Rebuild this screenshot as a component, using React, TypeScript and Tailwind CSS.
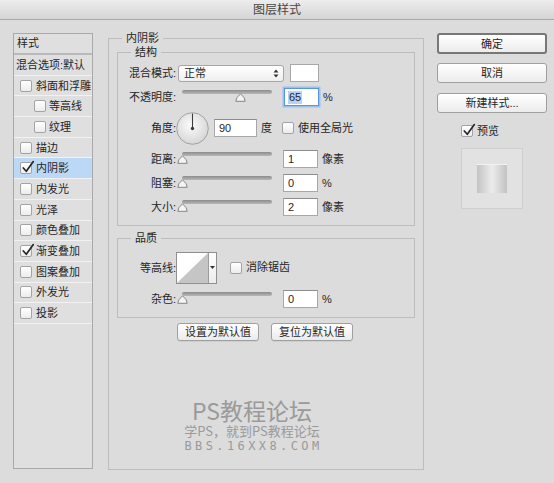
import React from 'react';

const effects = [
  { label: '斜面和浮雕' },
  { label: '等高线', indent: true },
  { label: '纹理', indent: true },
  { label: '描边' },
  { label: '内阴影', checked: true, active: true },
  { label: '内发光' },
  { label: '光泽' },
  { label: '颜色叠加' },
  { label: '渐变叠加', checked: true },
  { label: '图案叠加' },
  { label: '外发光' },
  { label: '投影' },
];

function Box({ checked }: { checked?: boolean }) {
  return (
    <span className="relative block w-[12px] h-[12px] shrink-0 rounded-[2px] border border-[#a3a3a3] bg-linear-to-b from-white to-[#ececec]">
      {checked && (
        <svg viewBox="0 0 14 14" className="absolute left-[0px] top-[-3px] w-[14px] h-[14px]">
          <path d="M2.3 8 L5.3 11.3 L12.3 1.6" fill="none" stroke="#262626" strokeWidth="1.7" strokeLinecap="round" strokeLinejoin="round" />
        </svg>
      )}
    </span>
  );
}

function Label({ children }: { children: React.ReactNode }) {
  return <span className="w-[58px] shrink-0 text-right leading-[14px]">{children}</span>;
}

function Field({ value, w = 35, focus }: { value: string; w?: number; focus?: boolean }) {
  if (focus) {
    return (
      <div className="h-[18px] w-[35px] shrink-0 bg-white border border-[#5b95dd] shadow-[0_0_0_1.5px_#9cc0ec] flex items-center pl-[3px]">
        <span className="bg-[#b4d3f6] leading-[13px] px-[1px]">{value}</span>
      </div>
    );
  }
  return (
    <div
      className={`h-[18px] shrink-0 bg-white border border-[#a8a8a8] border-t-[#8c8c8c] flex items-center pl-[4px] ${w === 43 ? 'w-[43px]' : 'w-[35px]'}`}
    >
      {value}
    </div>
  );
}

function Slider({ pct }: { pct: number }) {
  return (
    <div className="relative w-[100px] h-[18px] shrink-0">
      <div className="absolute left-[5px] right-[5px] top-[2px] h-[4px] rounded-full bg-linear-to-b from-[#8c8c8c] to-[#b8b8b8]" />
      <svg
        width="11"
        height="9"
        viewBox="0 0 11 9"
        className="absolute top-[5px]"
        style={{ left: 5 + pct * 0.9 - 5.5 }}
      >
        <path d="M0.8 8.3 Q0.8 4.6 5.5 0.8 Q10.2 4.6 10.2 8.3 Z" fill="#f4f4f4" stroke="#7a7a7a" strokeWidth="0.9" />
      </svg>
    </div>
  );
}

function Dial() {
  return (
    <svg width="33" height="33" viewBox="0 0 33 33" className="shrink-0">
      <defs>
        <radialGradient id="dialFill" cx="45%" cy="40%" r="65%">
          <stop offset="0" stopColor="#fbfbfb" />
          <stop offset="1" stopColor="#d3d3d3" />
        </radialGradient>
      </defs>
      <circle cx="16.5" cy="16.5" r="15.8" fill="url(#dialFill)" stroke="#a2a2a2" />
      <line x1="16.5" y1="16.5" x2="16.5" y2="1.5" stroke="#3c3c3c" strokeWidth="1.1" />
      <circle cx="16.5" cy="16.5" r="1.7" fill="#3c3c3c" />
    </svg>
  );
}

function SmallBtn({ children }: { children: React.ReactNode }) {
  return (
    <div className="h-[18px] w-[82px] rounded-[3px] border border-[#9f9f9f] bg-linear-to-b from-white to-[#ebebeb] flex items-center justify-center leading-[14px] shadow-[0_1px_0_rgba(0,0,0,0.06)]">
      {children}
    </div>
  );
}

export default function App() {
  return (
    <div className="w-[554px] h-[483px] overflow-hidden bg-[#dcdcdc] flex flex-col font-['Liberation_Sans','Noto_Sans_CJK_SC',sans-serif] text-[11px] text-[#262626]">
      {/* title bar */}
      <div className="h-[20px] shrink-0 flex items-center justify-center bg-linear-to-b from-[#ededed] to-[#d5d5d5] border-b border-[#a8a8a8] text-[12px] text-[#454545] leading-[16px]">
        图层样式
      </div>

      <div className="flex flex-1 items-start pl-[13px] pt-[13px]">
        {/* style list */}
        <div className="w-[80px] h-[436px] shrink-0 border border-[#a9a9a9] bg-[#dfdfdf] flex flex-col">
          <div className="h-[21px] shrink-0 border-b-2 border-[#b9b9b9] pl-[3px] pt-[2px] leading-[14px]">样式</div>
          <div className="h-[20.7px] shrink-0 border-b border-[#f2f2f2] flex items-center pl-[2px] leading-[14px]">混合选项:默认</div>
          {effects.map((e) => (
            <div
              key={e.label}
              className={`h-[20.7px] shrink-0 border-b border-[#f2f2f2] flex items-center leading-[14px] ${e.indent ? 'pl-[20px] gap-[3px]' : 'pl-[6px] gap-[4px]'} ${e.active ? 'bg-[#bcd8f7]' : ''}`}
            >
              <Box checked={e.checked} />
              <span>{e.label}</span>
            </div>
          ))}
        </div>

        {/* inner shadow panel */}
        <fieldset className="ml-[15px] mt-[-2px] w-[316px] h-[439px] shrink-0 border border-[#bdbdbd] px-[8px] flex flex-col">
          <legend className="ml-[5px] px-[4px] leading-[14px]">内阴影</legend>

          <fieldset className="border border-[#bdbdbd] pt-[5px] pb-[9px] flex flex-col gap-[6px]">
            <legend className="ml-[13px] px-[4px] leading-[14px]">结构</legend>

            <div className="flex items-center h-[18px]">
              <Label>混合模式:</Label>
              <div className="ml-[2px] w-[106px] h-[17px] rounded-[3px] border border-[#a6a6a6] bg-linear-to-b from-white to-[#efefef] flex items-center justify-between pl-[5px] pr-[4px] leading-[14px]">
                <span>正常</span>
                <svg width="6" height="9" viewBox="0 0 6 9">
                  <path d="M0.5 3.6 L3 0.6 L5.5 3.6 Z M0.5 5.4 L3 8.4 L5.5 5.4 Z" fill="#333" />
                </svg>
              </div>
              <div className="ml-[6px] w-[29px] h-[18px] bg-white border border-[#a8a8a8]" />
            </div>

            <div className="flex items-center h-[18px]">
              <Label>不透明度:</Label>
              <div className="ml-[1px]">
                <Slider pct={65} />
              </div>
              <div className="ml-[7px]">
                <Field value="65" focus />
              </div>
              <span className="ml-[4px]">%</span>
            </div>

            <div className="flex items-center h-[32px]">
              <Label>角度:</Label>
              <Dial />
              <div className="ml-[5px]">
                <Field value="90" w={43} />
              </div>
              <span className="ml-[4px]">度</span>
              <div className="ml-[10px] flex items-center gap-[4px]">
                <Box />
                <span>使用全局光</span>
              </div>
            </div>

            {[
              { label: '距离:', value: '1', unit: '像素' },
              { label: '阻塞:', value: '0', unit: '%' },
              { label: '大小:', value: '2', unit: '像素' },
            ].map((r) => (
              <div key={r.label} className="flex items-center h-[18px]">
                <Label>{r.label}</Label>
                <div className="ml-[1px]">
                  <Slider pct={0} />
                </div>
                <div className="ml-[6px]">
                  <Field value={r.value} />
                </div>
                <span className="ml-[4px]">{r.unit}</span>
              </div>
            ))}
          </fieldset>

          <fieldset className="mt-[5px] border border-[#bdbdbd] pt-[7px] pb-[9px] flex flex-col gap-[7px]">
            <legend className="ml-[13px] px-[4px] leading-[14px]">品质</legend>

            <div className="flex items-center h-[31px]">
              <Label>等高线:</Label>
              <div className="flex h-[32px] border border-[#8f8f8f] bg-white">
                <svg width="31" height="30" viewBox="0 0 31 30" className="block">
                  <polygon points="0,30 31,0 31,30" fill="#c5c5c5" />
                </svg>
                <div className="w-[8px] border-l border-[#9c9c9c] bg-linear-to-b from-white to-[#ececec] flex items-center justify-center">
                  <svg width="5" height="3" viewBox="0 0 5 3">
                    <path d="M0 0 L5 0 L2.5 3 Z" fill="#333" />
                  </svg>
                </div>
              </div>
              <div className="ml-[13px] flex items-center gap-[4px]">
                <Box />
                <span>消除锯齿</span>
              </div>
            </div>

            <div className="flex items-center h-[18px]">
              <Label>杂色:</Label>
              <div className="ml-[1px]">
                <Slider pct={0} />
              </div>
              <div className="ml-[6px]">
                <Field value="0" />
              </div>
              <span className="ml-[4px]">%</span>
            </div>
          </fieldset>

          <div className="mt-[5px] flex justify-center gap-[12px] pr-[2px]">
            <SmallBtn>设置为默认值</SmallBtn>
            <SmallBtn>复位为默认值</SmallBtn>
          </div>

          {/* watermark */}
          <div className="mt-[56px] pr-[28px] flex flex-col items-center text-[#9a9a9a] font-['Noto_Sans_CJK_SC',sans-serif]">
            <span className="text-[23px] leading-[26px]">PS教程论坛</span>
            <span className="text-[13px] leading-[16px]">学PS，就到PS教程论坛</span>
            <span className="text-[12px] leading-[15px] tracking-[3.4px] pl-[3px] font-['DejaVu_Sans_Mono',monospace]">BBS.16XX8.COM</span>
          </div>
        </fieldset>

        {/* right column */}
        <div className="ml-[13px] w-[110px] shrink-0 flex flex-col items-center leading-[14px]">
          <div className="w-[110px] h-[21px] rounded-[3px] border-2 border-[#777777] bg-linear-to-b from-white to-[#ececec] flex items-center justify-center">
            确定
          </div>
          <div className="mt-[9px] w-[110px] h-[20px] rounded-[3px] border border-[#9f9f9f] bg-linear-to-b from-white to-[#ececec] flex items-center justify-center">
            取消
          </div>
          <div className="mt-[10px] w-[110px] h-[20px] rounded-[3px] border border-[#9f9f9f] bg-linear-to-b from-white to-[#ececec] flex items-center justify-center">
            新建样式...
          </div>
          <div className="mt-[11px] w-[62px] flex items-center gap-[4px]">
            <Box checked />
            <span>预览</span>
          </div>
          <div className="mt-[10px] w-[62px] h-[61px] border border-[#cfcfcf] bg-[#e2e2e2] flex items-center justify-center">
            <div className="w-[30px] h-[29px] bg-linear-to-r from-[#c4c4c4] via-[#ececec] to-[#c2c2c2] border-t border-[#f2f2f2]" />
          </div>
        </div>
      </div>
    </div>
  );
}
